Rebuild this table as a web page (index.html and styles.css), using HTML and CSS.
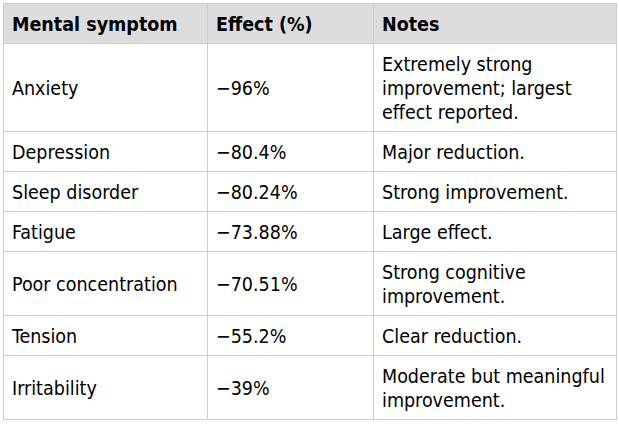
FILE: index.html
```html
<!DOCTYPE html>
<html>
<head>
<meta charset="utf-8">
<link rel="stylesheet" href="styles.css">
</head>
<body>
<table class="symptoms">
  <colgroup>
    <col class="c1"><col class="c2"><col class="c3">
  </colgroup>
  <thead>
    <tr><th>Mental symptom</th><th>Effect (%)</th><th>Notes</th></tr>
  </thead>
  <tbody>
    <tr><td>Anxiety</td><td>−96%</td><td>Extremely strong improvement; largest effect reported.</td></tr>
    <tr><td>Depression</td><td>−80.4%</td><td>Major reduction.</td></tr>
    <tr><td>Sleep disorder</td><td>−80.24%</td><td>Strong improvement.</td></tr>
    <tr><td>Fatigue</td><td>−73.88%</td><td>Large effect.</td></tr>
    <tr><td>Poor concentration</td><td>−70.51%</td><td>Strong cognitive improvement.</td></tr>
    <tr><td>Tension</td><td>−55.2%</td><td>Clear reduction.</td></tr>
    <tr><td>Irritability</td><td>−39%</td><td>Moderate but meaningful improvement.</td></tr>
  </tbody>
</table>
</body>
</html>
```

FILE: styles.css
```css
html, body {
  margin: 0;
  padding: 0;
  background: #ffffff;
}
body {
  padding: 3px;
  font-family: "DejaVu Sans Condensed", "DejaVu Sans", sans-serif;
  font-size: 19.5px;
  color: #000000;
}
.symptoms {
  border-collapse: collapse;
  table-layout: fixed;
  width: 613px;
}
.symptoms .c1 { width: 204px; }
.symptoms .c2 { width: 166px; }
.symptoms .c3 { width: 243px; }
.symptoms th,
.symptoms td {
  border: 1px solid #cccccc;
  padding: 9px 8px 6px 8px;
  line-height: 24px;
  text-align: left;
  vertical-align: middle;
}
.symptoms th {
  background: #dddddd;
  font-weight: bold;
}
```
